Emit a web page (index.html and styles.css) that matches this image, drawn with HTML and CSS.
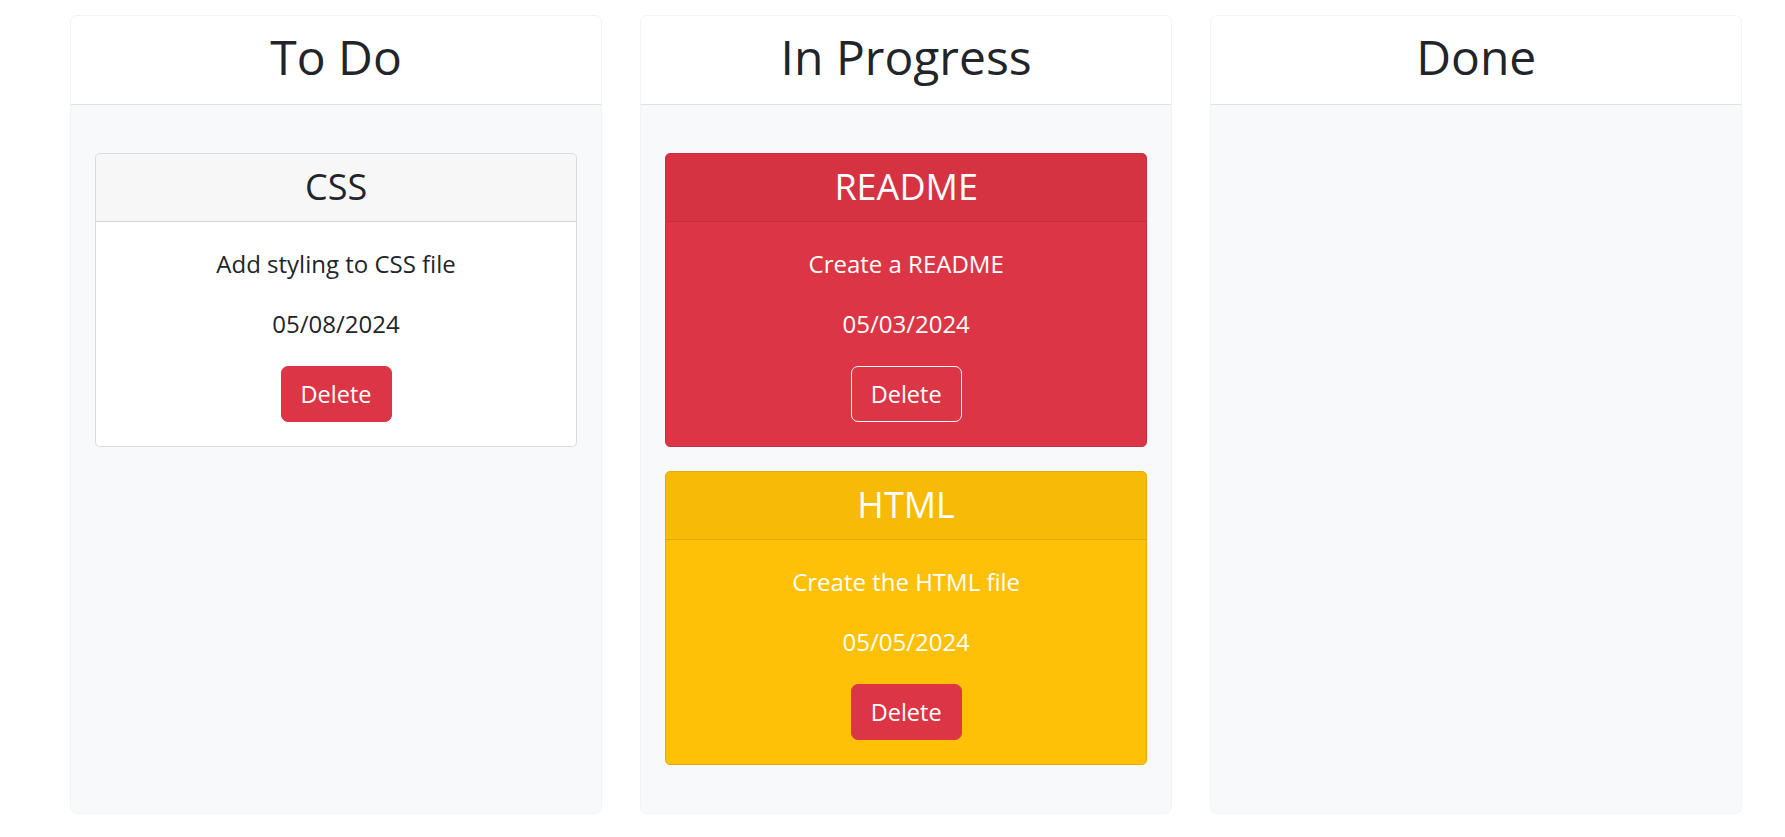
FILE: index.html
```html
<!DOCTYPE html>
<html lang="en">
<head>
<meta charset="utf-8">
<title>Task Board</title>
<link rel="stylesheet" href="styles.css">
</head>
<body>
<main class="board">
  <section class="lane">
    <header class="lane-head"><h1 class="lane-title">To Do</h1></header>
    <div class="lane-body">
      <article class="task task-plain">
        <div class="task-head"><h2 class="task-title">CSS</h2></div>
        <div class="task-body">
          <p class="task-text">Add styling to CSS file</p>
          <p class="task-text">05/08/2024</p>
          <button class="btn btn-danger" type="button">Delete</button>
        </div>
      </article>
    </div>
  </section>

  <section class="lane">
    <header class="lane-head"><h1 class="lane-title">In Progress</h1></header>
    <div class="lane-body">
      <article class="task task-danger">
        <div class="task-head"><h2 class="task-title">README</h2></div>
        <div class="task-body">
          <p class="task-text">Create a README</p>
          <p class="task-text">05/03/2024</p>
          <button class="btn btn-outline-light" type="button">Delete</button>
        </div>
      </article>
      <article class="task task-warning">
        <div class="task-head"><h2 class="task-title">HTML</h2></div>
        <div class="task-body">
          <p class="task-text">Create the HTML file</p>
          <p class="task-text">05/05/2024</p>
          <button class="btn btn-danger" type="button">Delete</button>
        </div>
      </article>
    </div>
  </section>

  <section class="lane">
    <header class="lane-head"><h1 class="lane-title">Done</h1></header>
    <div class="lane-body"></div>
  </section>
</main>
</body>
</html>
```
FILE: styles.css
```css
* {
  box-sizing: border-box;
}

html, body {
  margin: 0;
  padding: 0;
  background: #ffffff;
}

body {
  font-family: "Open Sans", "Noto Sans", "Liberation Sans", sans-serif;
  color: #212529;
}

.board {
  display: flex;
  align-items: stretch;
  gap: 38.6px;
  padding: 15px 43px 0 70.3px;
}

.lane {
  flex: 1 1 0;
  display: flex;
  flex-direction: column;
  border: 1px solid #f2f3f4;
  border-radius: 7px;
  overflow: hidden;
  background: #f8f9fa;
}

.lane-head {
  background: #ffffff;
  border-bottom: 1px solid #dee2e6;
  padding: 13px 16px 20px;
  text-align: center;
}

.lane-title {
  margin: 0;
  font-size: 48px;
  line-height: 55px;
  font-weight: 400;
  color: #212529;
}

.lane-body {
  flex: 1 1 auto;
  display: flex;
  flex-direction: column;
  gap: 24px;
  padding: 48px 24px 48px;
}

.task {
  border: 1px solid rgba(0, 0, 0, 0.14);
  border-radius: 5px;
  overflow: hidden;
  text-align: center;
}

.task-head {
  padding: 11px 18px 12px;
  border-bottom: 1px solid rgba(0, 0, 0, 0.14);
  background: rgba(0, 0, 0, 0.03);
}

.task-title {
  margin: 0;
  font-size: 36px;
  line-height: 44px;
  font-weight: 400;
}

.task-body {
  display: flex;
  flex-direction: column;
  align-items: center;
  gap: 26px;
  padding: 25px 18px 24px;
}

.task-text {
  margin: 0;
  font-size: 24px;
  line-height: 34px;
}

.task-plain {
  background: #ffffff;
  color: #212529;
}

.task-danger {
  background: #dc3545;
  color: #ffffff;
  border-color: #c9303f;
}

.task-danger .task-head {
  border-bottom-color: #c22f3d;
}

.task-warning {
  background: #ffc107;
  color: #ffffff;
  border-color: #e3ac06;
}

.task-warning .task-head {
  border-bottom-color: #dfa806;
}

.btn {
  font-family: inherit;
  font-size: 23.5px;
  line-height: 34px;
  height: 56px;
  width: 111px;
  margin-top: -1px;
  padding: 10px 0;
  border-radius: 7px;
  border: 1px solid transparent;
  cursor: pointer;
}

.btn-danger {
  background: #dc3545;
  border-color: #dc3545;
  color: #ffffff;
}

.btn-outline-light {
  background: transparent;
  border-color: #f8f9fa;
  color: #ffffff;
}
```
